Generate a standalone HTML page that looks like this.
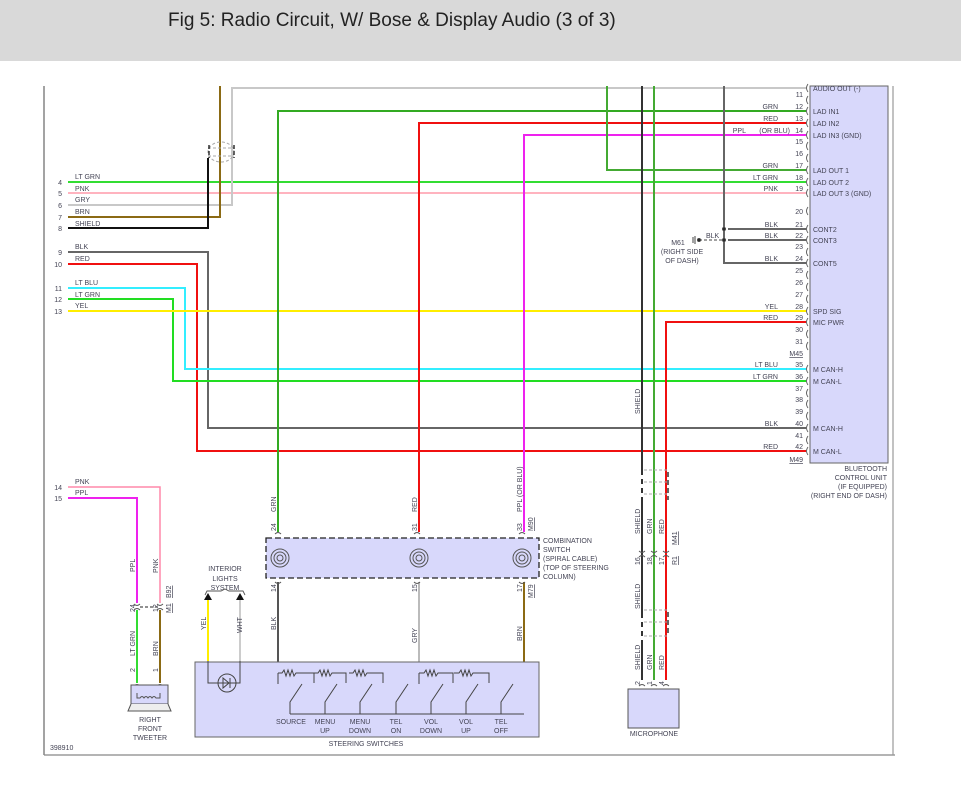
<!DOCTYPE html>
<html><head><meta charset="utf-8"><style>
html,body{margin:0;padding:0;background:#fff;width:961px;height:806px;overflow:hidden}
.hd{position:absolute;left:0;top:0;width:961px;height:61px;background:#d9d9d9}
.hd span{position:absolute;left:168px;top:10px;font:19px "Liberation Sans",sans-serif;color:#222}
svg{position:absolute;left:0;top:0}
text{font-family:"Liberation Sans",sans-serif;font-size:7px;fill:#445}
</style></head><body>
<div class="hd"><span>Fig 5: Radio Circuit, W/ Bose &amp; Display Audio (3 of 3)</span></div>
<svg width="961" height="806" viewBox="0 0 961 806">
<g fill="none" stroke-width="1.2">
<line x1="44" y1="86" x2="44" y2="755" stroke="#666"/>
<line x1="44" y1="755" x2="895" y2="755" stroke="#888"/>
<line x1="893" y1="86" x2="893" y2="755" stroke="#999"/>
</g>
<!-- bluetooth box -->
<rect x="810" y="86" width="78" height="377" fill="#d8d8fb" stroke="#666"/>
<g fill="none" stroke-width="2">
<!-- left wires -->
<polyline points="68,182 806,182" stroke="#33dd33"/>
<polyline points="68,193 806,193" stroke="#ff9aaa" stroke-width="1.5"/>
<polyline points="68,205 232,205 232,88 806,88" stroke="#c8c8c8"/>
<polyline points="68,217 220,217 220,86" stroke="#8b6a14"/>
<polyline points="68,228 208,228 208,158" stroke="#111"/>
<polyline points="68,252 208,252 208,428 806,428" stroke="#666"/>
<polyline points="68,264 197,264 197,451 806,451" stroke="#f01010"/>
<polyline points="68,288 185,288 185,369 806,369" stroke="#33eeff"/>
<polyline points="68,299 173,299 173,381 806,381" stroke="#22dd22"/>
<polyline points="68,311 806,311" stroke="#ffee00"/>
<!-- middle vertical -->
<polyline points="278,532 278,111 806,111" stroke="#33aa22"/>
<polyline points="419,532 419,123 806,123" stroke="#f01010"/>
<polyline points="524,532 524,135 806,135" stroke="#ee22ee"/>
<!-- right verticals -->
<polyline points="607,86 607,170 806,170" stroke="#44aa33"/>
<polyline points="642,86 642,470" stroke="#333"/>
<polyline points="654,86 654,680" stroke="#44aa33"/>
<polyline points="724,86 724,263 806,263" stroke="#666"/>
<polyline points="728,229 806,229" stroke="#666"/>
<polyline points="728,240 806,240" stroke="#666"/>
<polyline points="806,322 666,322 666,680" stroke="#f01010"/>
<polyline points="642,500 642,613" stroke="#333"/>
<polyline points="642,640 642,680" stroke="#333"/>
<!-- tweeter -->
<polyline points="68,487 160,487 160,603" stroke="#ff88aa" stroke-width="1.5"/>
<polyline points="68,498 137,498 137,603" stroke="#ee22ee"/>
<polyline points="137,610 137,683" stroke="#33dd33"/>
<polyline points="160,610 160,683" stroke="#8b6a14"/>
<!-- below combination -->
<polyline points="278,582 278,673" stroke="#555"/>
<polyline points="419,582 419,673" stroke="#bbb"/>
<polyline points="524,582 524,714" stroke="#8b6a14"/>
<polyline points="208,600 208,661" stroke="#ffee00"/>
<polyline points="240,600 240,661" stroke="#ccc"/>
</g>
<!-- shield symbol left -->
<g fill="none" stroke="#aaa" stroke-dasharray="3,2" stroke-width="1">
<ellipse cx="221" cy="152" rx="13" ry="10"/>
<line x1="208" y1="148" x2="234" y2="148"/><line x1="208" y1="156" x2="234" y2="156"/>
</g>
<g stroke="#111" stroke-width="1.3" stroke-dasharray="4,2"><line x1="209" y1="145" x2="209" y2="158"/><line x1="234" y1="145" x2="234" y2="158"/></g>
<!-- mic shields -->
<g fill="none" stroke="#aaa" stroke-dasharray="3,2"><line x1="644" y1="470" x2="668" y2="470"/><line x1="644" y1="482" x2="668" y2="482"/><line x1="644" y1="494" x2="668" y2="494"/>
<line x1="644" y1="610" x2="668" y2="610"/><line x1="644" y1="622" x2="668" y2="622"/><line x1="644" y1="636" x2="668" y2="636"/></g>
<g stroke="#333" stroke-width="2" stroke-dasharray="5,4"><line x1="642" y1="470" x2="642" y2="500"/><line x1="642" y1="613" x2="642" y2="640"/></g>
<g stroke="#333" stroke-width="1.5" stroke-dasharray="5,3"><line x1="668" y1="472" x2="668" y2="500"/><line x1="668" y1="612" x2="668" y2="636"/></g>
<!-- ground -->
<g stroke="#444" stroke-width="1" fill="#222"><line x1="699" y1="240" x2="722" y2="240" stroke-dasharray="3,2"/><circle cx="699" cy="240" r="1.5"/><circle cx="724" cy="229" r="1.5"/><circle cx="724" cy="240" r="1.5"/><line x1="695" y1="236" x2="695" y2="244"/><line x1="693" y1="237" x2="693" y2="243"/></g>
<!-- pin connectors -->
<g fill="none" stroke="#555" stroke-width="0.9">
<path d="M808,84 q-3,4 0,8 M808,96 q-3,4 0,8 M808,107 q-3,4 0,8 M808,119 q-3,4 0,8 M808,131 q-3,4 0,8 M808,142 q-3,4 0,8 M808,154 q-3,4 0,8 M808,166 q-3,4 0,8 M808,178 q-3,4 0,8 M808,189 q-3,4 0,8 M808,207 q-3,4 0,8 M808,225 q-3,4 0,8 M808,236 q-3,4 0,8 M808,248 q-3,4 0,8 M808,259 q-3,4 0,8 M808,271 q-3,4 0,8 M808,283 q-3,4 0,8 M808,295 q-3,4 0,8 M808,307 q-3,4 0,8 M808,318 q-3,4 0,8 M808,330 q-3,4 0,8 M808,342 q-3,4 0,8 M808,365 q-3,4 0,8 M808,377 q-3,4 0,8 M808,389 q-3,4 0,8 M808,400 q-3,4 0,8 M808,412 q-3,4 0,8 M808,424 q-3,4 0,8 M808,436 q-3,4 0,8 M808,447 q-3,4 0,8"/>
</g>
<!-- pin numbers -->
<g text-anchor="end">
<text x="803" y="97">11</text><text x="803" y="109">12</text><text x="803" y="121">13</text><text x="803" y="133">14</text><text x="803" y="144">15</text><text x="803" y="156">16</text><text x="803" y="168">17</text><text x="803" y="180">18</text><text x="803" y="191">19</text><text x="803" y="214">20</text><text x="803" y="227">21</text><text x="803" y="238">22</text><text x="803" y="249">23</text><text x="803" y="261">24</text><text x="803" y="273">25</text><text x="803" y="285">26</text><text x="803" y="297">27</text><text x="803" y="309">28</text><text x="803" y="320">29</text><text x="803" y="332">30</text><text x="803" y="344">31</text><text x="803" y="356" text-decoration="underline">M45</text><text x="803" y="367">35</text><text x="803" y="379">36</text><text x="803" y="391">37</text><text x="803" y="402">38</text><text x="803" y="414">39</text><text x="803" y="426">40</text><text x="803" y="438">41</text><text x="803" y="449">42</text><text x="803" y="462" text-decoration="underline">M49</text>
<text x="778" y="109">GRN</text><text x="778" y="121">RED</text><text x="790" y="133">(OR BLU)</text><text x="746" y="133">PPL</text><text x="778" y="168">GRN</text><text x="778" y="180">LT GRN</text><text x="778" y="191">PNK</text><text x="778" y="227">BLK</text><text x="778" y="238">BLK</text><text x="778" y="261">BLK</text><text x="778" y="309">YEL</text><text x="778" y="320">RED</text><text x="778" y="367">LT BLU</text><text x="778" y="379">LT GRN</text><text x="778" y="426">BLK</text><text x="778" y="449">RED</text>
<text x="887" y="471">BLUETOOTH</text><text x="887" y="480">CONTROL UNIT</text><text x="887" y="489">(IF EQUIPPED)</text><text x="887" y="498">(RIGHT END OF DASH)</text>
</g>
<g>
<text x="813" y="91">AUDIO OUT (-)</text><text x="813" y="114">LAD IN1</text><text x="813" y="126">LAD IN2</text><text x="813" y="138">LAD IN3 (GND)</text><text x="813" y="173">LAD OUT 1</text><text x="813" y="185">LAD OUT 2</text><text x="813" y="196">LAD OUT 3 (GND)</text><text x="813" y="232">CONT2</text><text x="813" y="243">CONT3</text><text x="813" y="266">CONT5</text><text x="813" y="314">SPD SIG</text><text x="813" y="325">MIC PWR</text><text x="813" y="372">M CAN-H</text><text x="813" y="384">M CAN-L</text><text x="813" y="431">M CAN-H</text><text x="813" y="454">M CAN-L</text>
<text x="706" y="238">BLK</text>
<text x="678" y="245" text-anchor="middle">M61</text><text x="682" y="254" text-anchor="middle">(RIGHT SIDE</text><text x="682" y="263" text-anchor="middle">OF DASH)</text>
<!-- left labels -->
<text x="75" y="179">LT GRN</text><text x="75" y="191">PNK</text><text x="75" y="202">GRY</text><text x="75" y="214">BRN</text><text x="75" y="226">SHIELD</text><text x="75" y="249">BLK</text><text x="75" y="261">RED</text><text x="75" y="285">LT BLU</text><text x="75" y="297">LT GRN</text><text x="75" y="308">YEL</text><text x="75" y="484">PNK</text><text x="75" y="495">PPL</text>
<g text-anchor="end"><text x="62" y="185">4</text><text x="62" y="196">5</text><text x="62" y="208">6</text><text x="62" y="220">7</text><text x="62" y="231">8</text><text x="62" y="255">9</text><text x="62" y="267">10</text><text x="62" y="291">11</text><text x="62" y="302">12</text><text x="62" y="314">13</text><text x="62" y="490">14</text><text x="62" y="501">15</text></g>
<text x="50" y="750">398910</text>
</g>
<!-- combination switch -->
<rect x="266" y="538" width="273" height="40" fill="#d8d8fb" stroke="#222" stroke-width="1.3" stroke-dasharray="6,3"/>
<g fill="none" stroke="#555" stroke-width="1">
<circle cx="280" cy="558" r="9"/><circle cx="280" cy="558" r="6"/><circle cx="280" cy="558" r="3"/>
<circle cx="419" cy="558" r="9"/><circle cx="419" cy="558" r="6"/><circle cx="419" cy="558" r="3"/>
<circle cx="522" cy="558" r="9"/><circle cx="522" cy="558" r="6"/><circle cx="522" cy="558" r="3"/>
<path d="M275,534 q3,-3 6,0 M414,534 q3,-3 6,0 M519,534 q3,-3 6,0 M275,582 q3,3 6,0 M414,582 q3,3 6,0 M519,582 q3,3 6,0"/>
</g>
<g>
<text x="543" y="543">COMBINATION</text><text x="543" y="552">SWITCH</text><text x="543" y="561">(SPIRAL CABLE)</text><text x="543" y="570">(TOP OF STEERING</text><text x="543" y="579">COLUMN)</text>
<text x="225" y="571" text-anchor="middle">INTERIOR</text><text x="225" y="581" text-anchor="middle">LIGHTS</text><text x="225" y="590" text-anchor="middle">SYSTEM</text>
<text x="150" y="722" text-anchor="middle">RIGHT</text><text x="150" y="731" text-anchor="middle">FRONT</text><text x="150" y="740" text-anchor="middle">TWEETER</text>
<text x="654" y="736" text-anchor="middle">MICROPHONE</text>
<text x="366" y="746" text-anchor="middle">STEERING SWITCHES</text>
</g>
<!-- rotated labels -->
<g>
<text transform="translate(276,512) rotate(-90)">GRN</text><text transform="translate(276,531) rotate(-90)">24</text>
<text transform="translate(417,512) rotate(-90)">RED</text><text transform="translate(417,531) rotate(-90)">31</text>
<text transform="translate(522,512) rotate(-90)">PPL  (OR BLU)</text><text transform="translate(522,531) rotate(-90)">33</text><text transform="translate(533,531) rotate(-90)" text-decoration="underline">M90</text>
<text transform="translate(276,592) rotate(-90)">14</text><text transform="translate(276,630) rotate(-90)">BLK</text>
<text transform="translate(417,592) rotate(-90)">15</text><text transform="translate(417,643) rotate(-90)">GRY</text>
<text transform="translate(522,592) rotate(-90)">17</text><text transform="translate(522,641) rotate(-90)">BRN</text><text transform="translate(533,598) rotate(-90)" text-decoration="underline">M79</text>
<text transform="translate(206,630) rotate(-90)">YEL</text><text transform="translate(242,633) rotate(-90)">WHT</text>
<text transform="translate(135,572) rotate(-90)">PPL</text><text transform="translate(158,573) rotate(-90)">PNK</text><text transform="translate(171,598) rotate(-90)" text-decoration="underline">B92</text>
<text transform="translate(135,612) rotate(-90)">24</text><text transform="translate(158,612) rotate(-90)">12</text><text transform="translate(171,613) rotate(-90)" text-decoration="underline">M1</text>
<text transform="translate(135,656) rotate(-90)">LT GRN</text><text transform="translate(158,656) rotate(-90)">BRN</text>
<text transform="translate(135,672) rotate(-90)">2</text><text transform="translate(158,672) rotate(-90)">1</text>
<text transform="translate(640,414) rotate(-90)">SHIELD</text>
<text transform="translate(640,534) rotate(-90)">SHIELD</text><text transform="translate(652,534) rotate(-90)">GRN</text><text transform="translate(664,534) rotate(-90)">RED</text><text transform="translate(677,545) rotate(-90)" text-decoration="underline">M41</text>
<text transform="translate(640,565) rotate(-90)">16</text><text transform="translate(652,565) rotate(-90)">18</text><text transform="translate(664,565) rotate(-90)">17</text><text transform="translate(677,565) rotate(-90)" text-decoration="underline">R1</text>
<text transform="translate(640,609) rotate(-90)">SHIELD</text>
<text transform="translate(640,670) rotate(-90)">SHIELD</text><text transform="translate(652,670) rotate(-90)">GRN</text><text transform="translate(664,670) rotate(-90)">RED</text>
<text transform="translate(640,685) rotate(-90)">2</text><text transform="translate(652,685) rotate(-90)">1</text><text transform="translate(664,685) rotate(-90)">4</text>
</g>
<!-- connectors misc -->
<g fill="none" stroke="#555" stroke-width="0.9"><path d="M134,604 q3,3 6,0 M157,604 q3,3 6,0 M134,610 q3,-3 6,0 M157,610 q3,-3 6,0 M639,551 q3,3 6,0 M651,551 q3,3 6,0 M663,551 q3,3 6,0 M639,557 q3,-3 6,0 M651,557 q3,-3 6,0 M663,557 q3,-3 6,0 M639,686 q3,-3 6,0 M651,686 q3,-3 6,0 M663,686 q3,-3 6,0 M134,686 q3,-3 6,0 M157,686 q3,-3 6,0"/>
<line x1="140" y1="607" x2="157" y2="607" stroke="#222" stroke-dasharray="3,2"/>
<path d="M205,595 l2,-4 h14 l4,-2 l4,2 h14 l2,4"/></g>
<g fill="#111"><path d="M204,600 l4,-7 l4,7z M236,600 l4,-7 l4,7z"/></g>
<!-- microphone -->
<rect x="628" y="689" width="51" height="39" fill="#d8d8fb" stroke="#555"/>
<!-- tweeter -->
<rect x="131" y="685" width="37" height="19" fill="#d8d8fb" stroke="#555"/>
<path d="M131,704 l-3,7 h43 l-3,-7" fill="#eee" stroke="#555"/>
<path d="M137,693 v5 h3 q2,-3 4,0 q2,-3 4,0 q2,-3 4,0 q2,-3 4,0 h4 v-5" fill="none" stroke="#555"/>
<!-- steering switches -->
<rect x="195" y="662" width="344" height="75" fill="#d8d8fb" stroke="#666"/>
<g fill="none" stroke="#444" stroke-width="1">
<polyline points="208,661 208,683 240,683 240,661" stroke="#444"/>
<circle cx="227" cy="683" r="9"/>
<path d="M223,678 l6,5 l-6,5z M230,678 v10"/>
<line x1="278" y1="673" x2="278" y2="684"/><line x1="419" y1="673" x2="419" y2="684"/>
<path d="M278,673 h4 l2,-3 l2,6 l2,-6 l2,6 l2,-6 l2,6 l2,-3 h18 v10 M314,673 h4 l2,-3 l2,6 l2,-6 l2,6 l2,-6 l2,6 l2,-3 h14 v10 M349,673 h4 l2,-3 l2,6 l2,-6 l2,6 l2,-6 l2,6 l2,-3 h16 v10"/>
<path d="M419,673 h5 l2,-3 l2,6 l2,-6 l2,6 l2,-6 l2,6 l2,-3 h15 v10 M454,673 h5 l2,-3 l2,6 l2,-6 l2,6 l2,-6 l2,6 l2,-3 h16 v10"/>
<path d="M290,714 v-12 l12,-18 M325,714 v-12 l12,-18 M360,714 v-12 l12,-18 M396,714 v-12 l12,-18 M431,714 v-12 l12,-18 M466,714 v-12 l12,-18 M501,714 v-12 l12,-18"/>
<line x1="290" y1="714" x2="524" y2="714"/>
</g>
<g text-anchor="middle">
<text x="291" y="724">SOURCE</text><text x="325" y="724">MENU</text><text x="325" y="733">UP</text><text x="360" y="724">MENU</text><text x="360" y="733">DOWN</text><text x="396" y="724">TEL</text><text x="396" y="733">ON</text><text x="431" y="724">VOL</text><text x="431" y="733">DOWN</text><text x="466" y="724">VOL</text><text x="466" y="733">UP</text><text x="501" y="724">TEL</text><text x="501" y="733">OFF</text>
</g>
</svg>
</body></html>
